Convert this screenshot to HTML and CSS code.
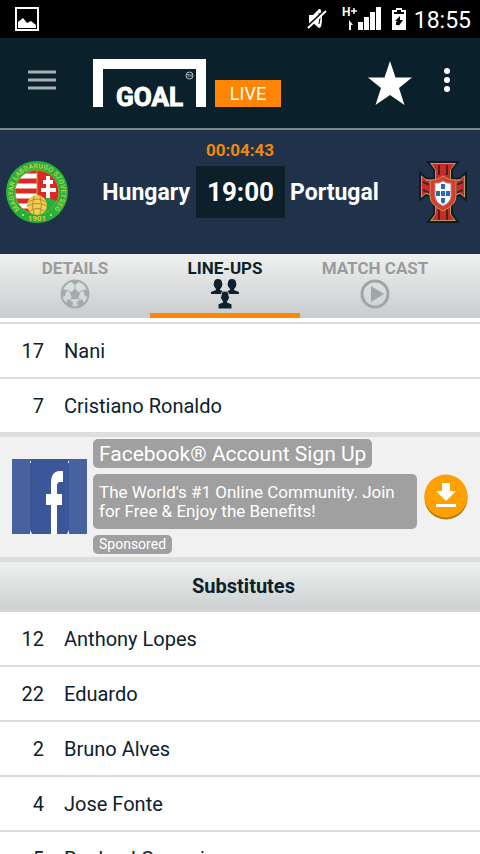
FILE: index.html
```html
<!DOCTYPE html>
<html lang="en">
<head>
    <meta charset="UTF-8">
    <meta name="viewport" content="width=device-width, initial-scale=1.0">
    <title>Goal Live</title>
    <link rel="stylesheet" href="styles.css">
</head>
<body>

    <div class="status-bar">
        <svg class="status-picture" width="24" height="24" viewBox="0 0 24 24">
            <rect x="1" y="1" width="22" height="22" fill="none" stroke="#fff" stroke-width="2"/>
            <path d="M3 21v-6l5-4 4 5 4-2 5 4v3z" fill="#fff"/>
        </svg>
        <svg width="20" height="22" viewBox="0 0 20 22">
            <path d="M2 7h4l6-6q3-1 3 9t-3 10l-6-5H2z" fill="#fff"/>
            <path d="M12 5q2 5 0 11" fill="none" stroke="#000"/>
            <path d="M0 19L18 2" stroke="#000" stroke-width="2"/>
            <path d="M1 20L19 3" stroke="#fff" stroke-width="2"/>
        </svg>
        <svg class="status-signal" width="40" height="24" viewBox="0 0 40 24">
            <text x="1" y="9" class="signal-type">H</text>
            <path d="M10 4h6M13 1v6" stroke="#fff" stroke-width="1.5"/>
            <path d="M8 13l4 5H10v5H8z" fill="#fff"/>
            <path d="M17 15h5v8h-5zM23 10h5v13h-5zM29 5h5v18h-5zM35 0h5v23h-5z" fill="#fff"/>
        </svg>
        <svg class="status-battery" width="14" height="22" viewBox="0 0 14 22">
            <path d="M0 2h4V0h6v2h4v20H0z" fill="#fff"/>
            <path d="M2 4h3V2h4v2h3v2H2z" fill="#000"/>
            <path d="M8 8L3 13h3l-2 1v3h3l-1 2 5-7H8z" fill="#000"/>
        </svg>
        <span class="clock">18:55</span>
    </div>

    <header class="header">
        <button class="icon-btn menu-btn" aria-label="Menu">
            <svg width="28" height="20" viewBox="0 0 28 20">
                <path d="M0 2h28M0 10h28M0 18h28" stroke="#a5afb4" stroke-width="3"/>
            </svg>
        </button>
        <div class="logo">
            <div class="goal">GOAL
                <svg class="trademark" width="9" height="9" viewBox="0 0 9 9">
                    <circle cx="4.500" cy="4.500" r="3.500" fill="none" stroke="#b8c3c8"/>
                    <path d="M2 3.500h2.500M3.200 3.500v2.500M5 6V3.500l1 1 1-1V6" fill="none" stroke="#b8c3c8" stroke-width=".7"/>
                </svg>
            </div>
            <div class="live">LIVE</div>
        </div>
        <button class="icon-btn" aria-label="Favourite">
            <svg width="44" height="44" viewBox="0 0 44 44">
                <path d="M22 0l5.500 16.500H44L31 27l5.500 17L22 34 7.500 44 13 27 0 16.500h16.500z" fill="#fff"/>
            </svg>
        </button>
        <button class="icon-btn more-btn" aria-label="More options">
            <svg width="6" height="26" viewBox="0 0 6 26">
                <g fill="#fff">
                    <circle cx="3" cy="4" r="3"/>
                    <circle cx="3" cy="13" r="3"/>
                    <circle cx="3" cy="22" r="3"/>
                </g>
            </svg>
        </button>
    </header>

    <section class="scoreboard">
        <div class="countdown">00:04:43</div>
        <div class="match">
            <svg width="62" height="62" viewBox="0 0 62 62">
                <defs>
                    <clipPath id="inner"><circle cx="31" cy="31" r="22"/></clipPath>
                    <path id="ring" d="M16 50A24 24 0 1 1 46 50"/>
                </defs>
                <circle cx="31" cy="31" r="31" fill="#25b13e"/>
                <g clip-path="url(#inner)">
                    <rect x="8" y="8" width="46" height="46" fill="#db2a26"/>
                    <path d="M8 15h23M8 25h23M8 35h23M8 45h23" stroke="#fff" stroke-width="5"/>
                    <path d="M31 48l10-12 14 6v14H31z" fill="#25b13e"/>
                    <path d="M42 15v22M37 21h10M35 29h15" stroke="#fff" stroke-width="4"/>
                    <path d="M31 8v28" stroke="#c9a340"/>
                </g>
                <circle cx="31" cy="31" r="22" fill="none" stroke="#82b13e"/>
                <circle cx="31" cy="44" r="10" fill="#efcf55"/>
                <path d="M22 41q9-6 18 0M21 45q10-5 20 0M24 50q7-5 14 0M28 35q-3 9 0 18M34 35q3 9 0 18" fill="none" stroke="#b98a2b"/>
                <text class="crest-text"><textPath href="#ring" startOffset="50%" text-anchor="middle">MAGYAR LABDARUGO SZOVETSEG</textPath></text>
                <text x="31" y="60" class="crest-year" text-anchor="middle">1901</text>
                <path d="M16 54h2M44 54h2" stroke="#d8d03c" stroke-width="2"/>
            </svg>
            <div class="team home">Hungary</div>
            <div class="score">19:00</div>
            <div class="team away">Portugal</div>
            <svg width="62" height="62" viewBox="-7 0 62 62">
                <path d="M9 1h30l-6 8v9l8-1 6-5v27l-6-5-4 1-4 10v8l6 8H9l6-8v-8l-4-10-4-1-6 5V12l6 5 8 1V9z" fill="#b49a62" stroke="#111b24" stroke-width="2"/>
                <path d="M13 3h22l-4 6v10l9 1 5-4v19l-5-4-3 1-6 12v9l4 6H13l4-6v-9l-6-12-3-1-5 4V16l5 4 9-1V9z" fill="#c92c28"/>
                <path d="M20 4v10M28 4v10M20 59V48M28 59V48M4 21l7 3v8l-7-3M44 21l-7 3v8l7-3" fill="none" stroke="#4c211e" stroke-width="2"/>
                <path d="M11 19q7 1 13-4 6 5 13 4v16q0 9-13 15-13-6-13-15z" fill="#dc3a2d" stroke="#c09b62" stroke-width="1"/>
                <path d="M16 22q4 1 8-2 4 3 8 2v13q0 6-8 10-8-4-8-10z" fill="#fff" stroke="#999"/>
                <path d="M22 23h4v5h-4zM22 30h4v5h-4zM22 37h4v4l-2 2-2-2zM17 30h4v5h-4zM27 30h4v5h-4z" fill="#286ab8"/>
            </svg>
        </div>
    </section>

    <nav class="tabs">
        <button class="tab">DETAILS
            <svg width="30" height="30" viewBox="0 0 30 30">
                <circle cx="15" cy="15" r="13.500" fill="none" stroke="#a3abad" stroke-width="2"/>
                <path d="M15 10l5 4-2 6h-6l-2-6zM10 2h10l-5 4zM2 10l5 1-2 6-4 1zM28 10l-5 1 2 6 4 1zM6 24l2-4 5 3-1 6zM24 24l-2-4-5 3 1 6z" fill="#a3abad"/>
                <path d="M15 5v6M7 11l4 3M23 11l-4 3M9 22l3-3M21 22l-3-3" stroke="#a3abad"/>
            </svg>
        </button>
        <button class="tab active">LINE-UPS
            <svg width="30" height="30" viewBox="0 0 30 30">
                <defs>
                    <path id="person" d="M4 4q0-4 4-4t4 4q1 1 0 3-1 3-2 3v1l5 2v2H1v-2l5-2v-1Q5 9 4 7q-1-2 0-3z"/>
                </defs>
                <g fill="#0c212b">
                    <use href="#person" x="0"/>
                    <use href="#person" x="14"/>
                    <path d="M11 17q0-5 4-5t4 5q1 2 0 3-1 2-2 3l5 2v5H8v-5l5-2q-1-1-2-3-1-1 0-3z" stroke="#d6d9da" stroke-width="1"/>
                </g>
            </svg>
        </button>
        <button class="tab">MATCH CAST
            <svg width="30" height="30" viewBox="0 0 30 30">
                <circle cx="15" cy="15" r="13" fill="none" stroke="#9fa6a8" stroke-width="3"/>
                <path d="M11 7l13 8-13 8z" fill="#9fa6a8"/>
            </svg>
        </button>
    </nav>

    <main class="lineup">
        <ul class="players first">
            <li><span class="number">17</span>Nani</li>
            <li><span class="number">7</span>Cristiano Ronaldo</li>
        </ul>

        <aside class="ad">
            <svg width="75" height="75" viewBox="0 0 75 75">
                <rect width="75" height="75" fill="#48629f"/>
                <rect x="18" width="39" height="75" fill="#3b579a"/>
                <path d="M18 1l1 2v1h-1zM57 1l-1 2v1h1zM18 71l2 4h-2zM57 71l-2 4h2z" fill="#fff"/>
                <path d="M39 75V46h-5V35h5V24q0-12 9-12h3v11h-3q-3 0-3 4v8h5v11h-5v29z" fill="#fff"/>
            </svg>
            <div class="ad-text">
                <h3>Facebook® Account Sign Up</h3>
                <p>The World's #1 Online Community. Join for Free &amp; Enjoy the Benefits!</p>
                <small>Sponsored</small>
            </div>
            <button class="icon-btn" aria-label="Download">
                <svg width="44" height="46" viewBox="0 0 44 46">
                    <circle cx="22" cy="24" r="21.500" fill="#b37713"/>
                    <circle cx="22" cy="22" r="21.500" fill="#ffa000"/>
                    <path d="M18 9h8v8h6l-10 10-10-10h6zM12 30h20v3H12z" fill="#fff"/>
                </svg>
            </button>
        </aside>

        <h2 class="section-title">Substitutes</h2>
        <ul class="players">
            <li><span class="number">12</span>Anthony Lopes</li>
            <li><span class="number">22</span>Eduardo</li>
            <li><span class="number">2</span>Bruno Alves</li>
            <li><span class="number">4</span>Jose Fonte</li>
            <li><span class="number">5</span>Raphael Guerreiro</li>
        </ul>
    </main>

</body>
</html>
```
FILE: styles.css
```css
* {
    font-family: Roboto, "Liberation Sans", sans-serif;
    margin: 0;
    padding: 0;
    box-sizing: border-box;
}

body {
    display: flex;
    flex-direction: column;
    height: 100vh;
    overflow: hidden;
    background: #fff;
    color: #0c212b;
}

svg {
    display: block;
    flex: none;
}

button {
    background: none;
    border: none;
    cursor: pointer;
}

.status-bar {
    display: flex;
    flex: none;
    align-items: center;
    height: 38px;
    padding: 0 9px 0 15px;
    background: #000;
    color: #fff;
}

.status-picture {
    margin-right: auto;
}

.status-signal {
    margin-left: 14px;
}

.status-battery {
    margin: 0 8px 0 11px;
}

.signal-type {
    font-size: 12px;
    font-weight: bold;
    fill: #fff;
}

.clock {
    padding-top: 2px;
    font-size: 23px;
}

.header {
    display: flex;
    flex: none;
    align-items: center;
    height: 92px;
    padding: 0 30px 0 28px;
    background: #0a202b;
    border-bottom: 2px solid #7f878c;
}

.menu-btn {
    margin: 0 37px 6px 0;
}

.more-btn {
    margin: 0 0 6px 32px;
}

.logo {
    display: flex;
    align-items: flex-end;
    gap: 9px;
    margin-right: auto;
    color: #fff;
}

.goal {
    position: relative;
    width: 113px;
    height: 48px;
    padding-top: 15px;
    border: 10px solid #fff;
    border-bottom: none;
    font-size: 26px;
    font-weight: bold;
    line-height: 27px;
    text-align: center;
    -webkit-text-stroke: 1px #fff;
}

.trademark {
    position: absolute;
    top: 2px;
    right: 2px;
}

.live {
    width: 66px;
    background: #ff8503;
    font-size: 18px;
    line-height: 27px;
    text-align: center;
}

.scoreboard {
    flex: none;
    height: 124px;
    padding: 10px 6px 0;
    background: #1f324a;
    color: #fff;
}

.countdown {
    color: #f0870f;
    font-size: 17px;
    font-weight: bold;
    line-height: 20px;
    text-align: center;
}

.match {
    display: flex;
    align-items: center;
    margin-top: 1px;
}

.team {
    flex: 1;
    font-size: 23px;
    font-weight: bold;
}

.home {
    padding-right: 6px;
    text-align: right;
}

.away {
    padding-left: 5px;
}

.score {
    width: 89px;
    background: #0d2029;
    font-size: 26px;
    font-weight: bold;
    line-height: 52px;
    text-align: center;
}

.crest-text {
    font-size: 7px;
    font-weight: bold;
    fill: #b5cf3c;
}

.crest-year {
    font-size: 8px;
    font-weight: bold;
    fill: #d8d03c;
}

.tabs {
    display: flex;
    flex: none;
    height: 64px;
    background: linear-gradient(#eff1f0, #c9cccd);
}

.tab {
    display: flex;
    flex-direction: column;
    align-items: center;
    width: 150px;
    padding-top: 4px;
    border-bottom: 5px solid transparent;
    color: #999c9d;
    font-size: 17px;
    font-weight: bold;
    line-height: 21px;
}

.active {
    border-color: #ff8503;
    color: #0c212b;
}

.lineup {
    flex: 1;
    overflow-y: auto;
    scrollbar-width: none;
}

.players {
    list-style: none;
}

.first {
    margin-top: 4px;
    border-top: 2px solid #dcdcdc;
}

.players li {
    display: flex;
    align-items: center;
    gap: 20px;
    height: 55px;
    border-bottom: 2px solid #dcdcdc;
    font-size: 20px;
}

.first li:last-child {
    height: 53px;
    border-bottom: none;
}

.number {
    width: 44px;
    text-align: right;
}

.ad {
    display: flex;
    align-items: center;
    padding: 2px 12px 3px;
    background: #f1f1f1;
    border: solid #dcdddd;
    border-width: 5px 0;
}

.ad-text {
    display: flex;
    flex: 1;
    flex-direction: column;
    align-items: flex-start;
    gap: 6px;
    margin: 0 7px 0 6px;
    color: #fff;
}

.ad-text > * {
    padding: 0 6px;
    background: #a0a0a0;
    border-radius: 5px;
    font-weight: normal;
}

.ad-text h3 {
    padding-top: 1px;
    font-size: 21px;
    line-height: 28px;
}

.ad-text p {
    width: 100%;
    padding: 9px 6px 8px;
    font-size: 17px;
    line-height: 19px;
}

.ad-text small {
    font-size: 14px;
    line-height: 19px;
}

.section-title {
    height: 50px;
    background: linear-gradient(#eff1f0, #ccd0d0);
    border-bottom: 2px solid #d5d7d7;
    font-size: 20px;
    line-height: 48px;
    padding-left: 7px;
    text-align: center;
}
```
